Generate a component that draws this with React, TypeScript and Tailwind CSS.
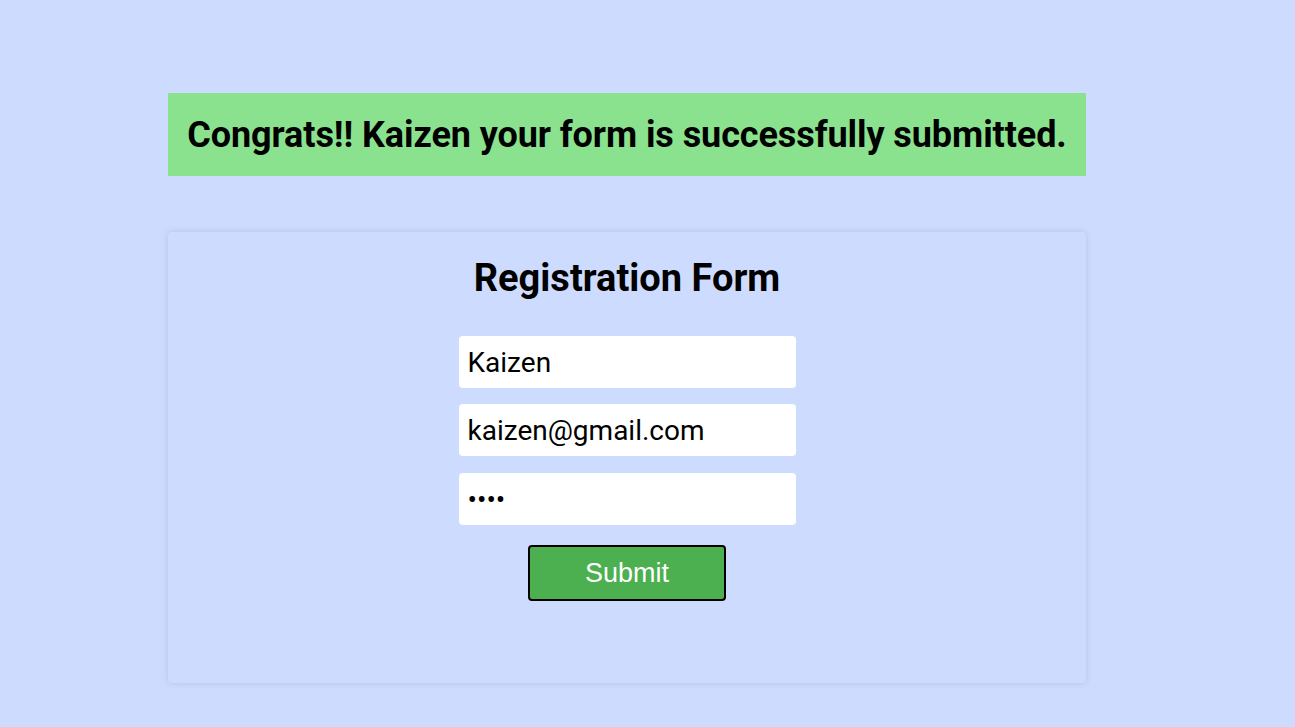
import React from "react";

export default function App() {
  return (
    <main
      className="min-h-screen w-full bg-[#cddcfe] pt-[93px]"
      style={{ fontFamily: "Roboto, 'Liberation Sans', sans-serif" }}
    >
      <div className="ml-[168px] flex w-[918px] flex-col gap-[56px]">
        {/* Success banner */}
        <div className="flex h-[83px] items-center justify-center bg-[#8be28e]">
          <h2 className="text-[36px] font-bold tracking-[-0.08px] text-black">
            Congrats!! Kaizen your form is successfully submitted.
          </h2>
        </div>

        {/* Form card */}
        <div className="flex h-[451px] flex-col items-center rounded-[4px] bg-[#cddcfe] pt-[22px] shadow-[0_0_6px_rgba(100,120,180,0.25)]">
          <h1 className="text-[38px] font-bold leading-[48px] text-black">
            Registration Form
          </h1>
          <form className="mt-[34px] flex flex-col items-center gap-[16px]">
            <input
              type="text"
              defaultValue="Kaizen"
              className="h-[52px] w-[337px] rounded-[4px] bg-white px-[9px] text-[28px] text-black outline-none"
            />
            <input
              type="email"
              defaultValue="kaizen@gmail.com"
              className="h-[52px] w-[337px] rounded-[4px] bg-white px-[9px] text-[28px] text-black outline-none"
            />
            <input
              type="password"
              defaultValue="abcd"
              className="mt-[1px] h-[52px] w-[337px] rounded-[4px] bg-white px-[9px] text-[28px] text-black outline-none"
            />
            <button
              type="button"
              className="mt-[4px] h-[56px] w-[198px] rounded-[4px] border-2 border-black bg-[#4caf50] text-[27px] text-white"
              style={{ fontFamily: "'Liberation Sans', Arial, sans-serif" }}
            >
              Submit
            </button>
          </form>
        </div>
      </div>
    </main>
  );
}
